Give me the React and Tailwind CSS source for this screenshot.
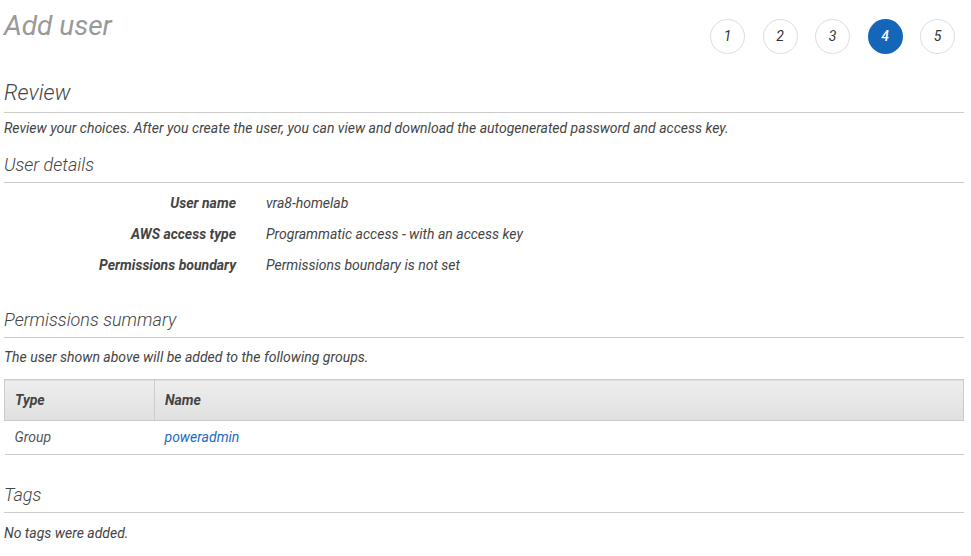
import React from 'react';

const steps = [1, 2, 3, 4, 5];
const current = 4;

const details = [
  { label: 'User name', value: 'vra8-homelab' },
  { label: 'AWS access type', value: 'Programmatic access - with an access key' },
  { label: 'Permissions boundary', value: 'Permissions boundary is not set' },
];

const SectionTitle = ({ children, className = '' }) => (
  <h2 className={`text-[18px] font-light leading-[24px] text-[#444] border-b border-[#ccc] pb-[5px] ${className}`}>
    {children}
  </h2>
);

const App = () => {
  return (
    <div className="w-[971px] h-[556px] overflow-hidden bg-white pl-[4px] pr-[7px] font-['Roboto',sans-serif] italic text-[#444]">
      {/* header with step indicator */}
      <div className="flex justify-between items-start">
        <h1 className="text-[28px] font-normal leading-[50px] text-[#999] mt-[1px]">Add user</h1>
        <div className="flex gap-[17.5px] pt-[19px] pr-[9px]">
          {steps.map((n) => (
            <div
              key={n}
              className={
                n === current
                  ? 'w-[35px] h-[35px] rounded-full flex items-center justify-center text-[14px] font-medium bg-[#1466b8] text-white'
                  : 'w-[35px] h-[35px] rounded-full flex items-center justify-center text-[14px] border border-[#ddd] text-[#333]'
              }
            >
              {n}
            </div>
          ))}
        </div>
      </div>

      {/* Review */}
      <SectionTitle className="text-[22px] leading-[28px] mt-[25px] pb-[4px]">Review</SectionTitle>
      <p className="text-[14px] leading-[20px] text-[#444] mt-[5px]">
        Review your choices. After you create the user, you can view and download the autogenerated password and access key.
      </p>

      {/* User details */}
      <SectionTitle className="mt-[15px]">User details</SectionTitle>
      <div className="grid grid-cols-[232px_1fr] gap-x-[30px] gap-y-[11px] mt-[10px] text-[14px] leading-[20px]">
        {details.map((d) => (
          <React.Fragment key={d.label}>
            <div className="text-right font-bold text-[#444]">{d.label}</div>
            <div className="text-[#444]">{d.value}</div>
          </React.Fragment>
        ))}
      </div>

      {/* Permissions summary */}
      <SectionTitle className="mt-[33px]">Permissions summary</SectionTitle>
      <p className="text-[14px] leading-[20px] mt-[9px]">The user shown above will be added to the following groups.</p>
      <table className="w-full mt-[12px] border-collapse text-[14px]">
        <thead>
          <tr className="bg-gradient-to-b from-[#eeeeee] to-[#e0e0e0] border border-[#ccc]">
            <th className="w-[150px] h-[41px] px-[10px] text-left font-bold text-[#444] border-r border-[#ccc]">Type</th>
            <th className="h-[41px] px-[10px] text-left font-bold text-[#444]">Name</th>
          </tr>
        </thead>
        <tbody>
          <tr className="border-b border-[#ccc]">
            <td className="h-[34px] px-[10px] text-[#555] font-normal">Group</td>
            <td className="h-[34px] px-[10px] text-[#1a6bc2]">poweradmin</td>
          </tr>
        </tbody>
      </table>

      {/* Tags */}
      <SectionTitle className="mt-[28px]">Tags</SectionTitle>
      <p className="text-[14px] leading-[20px] mt-[10px]">No tags were added.</p>
    </div>
  );
};

export default App;
